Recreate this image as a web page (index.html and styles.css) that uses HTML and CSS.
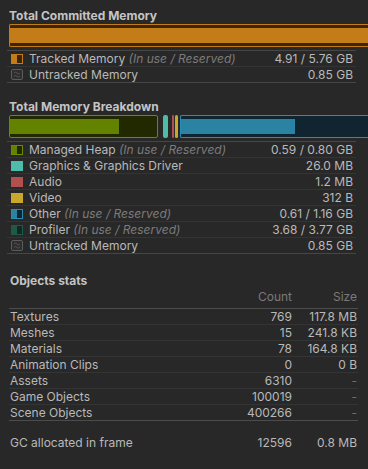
FILE: index.html
```html
<!DOCTYPE html>
<html lang="en">
<head>
  <meta charset="UTF-8">
  <title>Memory Summary</title>
  <link rel="stylesheet" href="styles.css">
</head>
<body>
  <div class="panel">
    <h2 class="title">Total Committed Memory</h2>
    <div class="bar">
      <div class="seg seg-tracked"><div class="fill" style="width: 100%"></div></div>
    </div>
    <div class="legend">
      <div class="row"><span class="icon icon-split tracked"></span><span class="name">Tracked Memory <i>(In use / Reserved)</i></span><span class="val">4.91 / 5.76 GB</span></div>
      <div class="row"><svg class="icon-untracked" width="12" height="11" viewBox="0 0 12 11"><rect x="0.5" y="0.5" width="11" height="10" rx="1.5" fill="#2e2e2e" stroke="#5c5c5c"/><path d="M3 3.5 Q5 2.5 6 4 T9 4.5 M3 7 Q5 6 6 7.5 T9 7" fill="none" stroke="#5c5c5c" stroke-width="0.8"/></svg><span class="name">Untracked Memory</span><span class="val">0.85 GB</span></div>
    </div>

    <h2 class="title title-second">Total Memory Breakdown</h2>
    <div class="bar">
      <div class="seg seg-managed"><div class="fill" style="width: 109px"></div></div>
      <div class="solid solid-gfx"></div>
      <div class="solid solid-audio"></div>
      <div class="solid solid-video"></div>
      <div class="seg seg-other"><div class="fill" style="width: 114px"></div></div>
    </div>
    <div class="legend">
      <div class="row"><span class="icon icon-split managed"></span><span class="name">Managed Heap <i>(In use / Reserved)</i></span><span class="val">0.59 / 0.80 GB</span></div>
      <div class="row"><span class="icon gfx"></span><span class="name">Graphics &amp; Graphics Driver</span><span class="val">26.0 MB</span></div>
      <div class="row"><span class="icon audio"></span><span class="name">Audio</span><span class="val">1.2 MB</span></div>
      <div class="row"><span class="icon video"></span><span class="name">Video</span><span class="val">312 B</span></div>
      <div class="row"><span class="icon icon-split other"></span><span class="name">Other <i>(In use / Reserved)</i></span><span class="val">0.61 / 1.16 GB</span></div>
      <div class="row"><span class="icon icon-split profiler"></span><span class="name">Profiler <i>(In use / Reserved)</i></span><span class="val">3.68 / 3.77 GB</span></div>
      <div class="row"><svg class="icon-untracked" width="12" height="11" viewBox="0 0 12 11"><rect x="0.5" y="0.5" width="11" height="10" rx="1.5" fill="#2e2e2e" stroke="#5c5c5c"/><path d="M3 3.5 Q5 2.5 6 4 T9 4.5 M3 7 Q5 6 6 7.5 T9 7" fill="none" stroke="#5c5c5c" stroke-width="0.8"/></svg><span class="name">Untracked Memory</span><span class="val">0.85 GB</span></div>
    </div>

    <h2 class="title title-stats">Objects stats</h2>
    <div class="stats">
      <div class="srow shead"><span class="sname"></span><span class="scount">Count</span><span class="ssize">Size</span></div>
      <div class="srow"><span class="sname">Textures</span><span class="scount">769</span><span class="ssize">117.8 MB</span></div>
      <div class="srow"><span class="sname">Meshes</span><span class="scount">15</span><span class="ssize">241.8 KB</span></div>
      <div class="srow"><span class="sname">Materials</span><span class="scount">78</span><span class="ssize">164.8 KB</span></div>
      <div class="srow"><span class="sname">Animation Clips</span><span class="scount">0</span><span class="ssize">0 B</span></div>
      <div class="srow"><span class="sname">Assets</span><span class="scount">6310</span><span class="ssize dim">-</span></div>
      <div class="srow"><span class="sname">Game Objects</span><span class="scount">100019</span><span class="ssize dim">-</span></div>
      <div class="srow last"><span class="sname">Scene Objects</span><span class="scount">400266</span><span class="ssize dim">-</span></div>
      <div class="srow gc"><span class="sname">GC allocated in frame</span><span class="scount">12596</span><span class="ssize">0.8 MB</span></div>
    </div>
  </div>
</body>
</html>
```

FILE: styles.css
```css
* {
  margin: 0;
  padding: 0;
  box-sizing: border-box;
}

body {
  background: #282828;
  font-family: Inter, "Noto Sans", sans-serif;
  font-size: 12px;
  color: #b9b9b9;
  overflow: hidden;
  height: 469px;
}

.panel {
  padding: 8px 0 0 9px;
  width: 368px;
}

.title {
  font-size: 12px;
  font-weight: 700;
  color: #c4c4c4;
  line-height: 16px;
}

.title-second {
  margin-top: 16px;
}

.title-stats {
  margin-top: 19px;
  padding-left: 1px;
}

/* memory bars */
.bar {
  display: flex;
  height: 23px;
  width: 359px;
}

.seg {
  height: 23px;
  border: 1px solid;
  border-radius: 2px;
  padding: 3px 0;
}

.seg .fill {
  height: 100%;
}

.seg-tracked {
  flex: 1;
  border-right: none;
  border-radius: 2px 0 0 2px;
  border-color: #c47c18;
  background: #3b2607;
}

.seg-tracked .fill { background: #c47c18; }

.seg-managed {
  width: 149px;
  border-color: #6a8a00;
  background: #222900;
}

.seg-managed .fill { background: #628200; }

.seg-other {
  flex: 1;
  border-right: none;
  border-radius: 2px 0 0 2px;
  border-color: #2a8db0;
  background: #10252f;
  margin-left: 2px;
}

.seg-other .fill { background: #2b83a4; }

.solid {
  height: 23px;
  border-radius: 2px;
}

.solid-gfx {
  width: 5px;
  margin-left: 5px;
  background: #4fbcab;
}

.solid-audio {
  width: 2px;
  margin-left: 4px;
  background: #b24f4f;
}

.solid-video {
  width: 3px;
  margin-left: 1px;
  background: #c9a72c;
}

/* legend */
.legend {
  margin-top: 3px;
  width: 349px;
  margin-left: -2px;
  border-top: 1px solid #464646;
}

.row {
  display: flex;
  align-items: center;
  height: 16px;
  border-bottom: 1px solid #343434;
  padding: 0 3px 0 4px;
}

.row:last-child {
  border-bottom-color: #464646;
}

.name {
  flex: 1;
  margin-left: 6px;
  white-space: nowrap;
}

.name i {
  color: #7c7c7c;
}

.val {
  text-align: right;
}

.icon {
  width: 12px;
  height: 10px;
  flex: none;
}

.icon-split {
  border: 1px solid;
}

.tracked { border-color: #c47c18; background: linear-gradient(90deg, #c47c18 50%, #3b2607 50%); }
.managed { border-color: #6a8a00; background: linear-gradient(90deg, #628200 50%, #222900 50%); }
.other { border-color: #2a8db0; background: linear-gradient(90deg, #2b83a4 50%, #10252f 50%); }
.profiler { border-color: #1f5a49; background: linear-gradient(90deg, #1f5a49 50%, #122822 50%); }
.gfx { background: #4fbcab; }
.audio { background: #b24f4f; }
.video { background: #c9a72c; }

.icon-untracked {
  flex: none;
  display: block;
}

/* object stats */
.stats {
  width: 349px;
}

.srow {
  display: flex;
  height: 16px;
  align-items: center;
  border-bottom: 1px solid #343434;
  padding-left: 1px;
}

.sname {
  flex: 1;
  white-space: nowrap;
}

.scount {
  width: 80px;
  text-align: right;
}

.ssize {
  width: 66px;
  text-align: right;
  padding-right: 1px;
}

.shead {
  color: #7a7a7a;
  border-bottom-color: #4c4c4c;
  height: 20px;
  align-items: flex-start;
  line-height: 14px;
  padding-top: 1px;
}

.dim {
  color: #6c6c6c;
}

.srow.last {
  border-bottom-color: #4c4c4c;
}

.srow.gc {
  border-bottom: none;
  margin-top: 13px;
}
```
